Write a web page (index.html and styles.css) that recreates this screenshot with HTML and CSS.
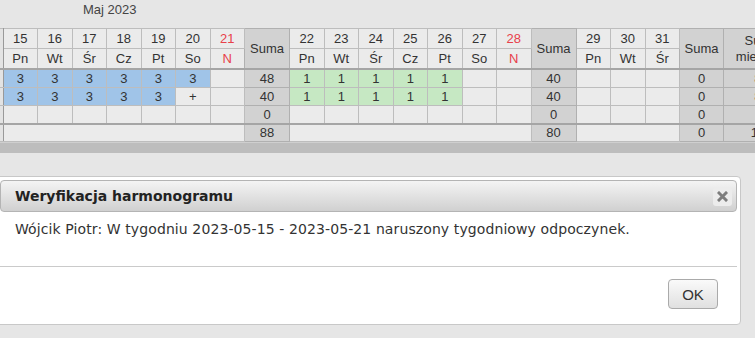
FILE: index.html
```html
<!DOCTYPE html>
<html lang="pl">
<head>
    <meta charset="UTF-8">
    <meta name="viewport" content="width=device-width, initial-scale=1.0">
    <title>Harmonogram</title>
    <link rel="stylesheet" href="styles.css">
</head>
<body>

<div class="schedule">
    <div class="month">Maj 2023</div>
    <table class="grid">
        <colgroup>
            <col class="c-edge">
            <col class="c-day"><col class="c-day"><col class="c-day"><col class="c-day"><col class="c-day"><col class="c-day"><col class="c-day">
            <col class="c-sum">
            <col class="c-day"><col class="c-day"><col class="c-day"><col class="c-day"><col class="c-day"><col class="c-day"><col class="c-day">
            <col class="c-sum">
            <col class="c-day"><col class="c-day"><col class="c-day">
            <col class="c-sum2">
            <col class="c-month">
        </colgroup>
        <thead>
            <tr class="h-num">
                <th class="edge" rowspan="2"></th>
                <th>15</th><th>16</th><th>17</th><th>18</th><th>19</th><th>20</th><th class="sun">21</th>
                <th class="sum" rowspan="2">Suma</th>
                <th>22</th><th>23</th><th>24</th><th>25</th><th>26</th><th>27</th><th class="sun">28</th>
                <th class="sum" rowspan="2">Suma</th>
                <th>29</th><th>30</th><th>31</th>
                <th class="sum" rowspan="2">Suma</th>
                <th class="sum" rowspan="2">Suma<br>miesiąca</th>
            </tr>
            <tr class="h-name">
                <th>Pn</th><th>Wt</th><th>Śr</th><th>Cz</th><th>Pt</th><th>So</th><th class="sun">N</th>
                <th>Pn</th><th>Wt</th><th>Śr</th><th>Cz</th><th>Pt</th><th>So</th><th class="sun">N</th>
                <th>Pn</th><th>Wt</th><th>Śr</th>
            </tr>
        </thead>
        <tbody>
            <tr>
                <td class="edge"></td>
                <td class="blue">3</td><td class="blue">3</td><td class="blue">3</td><td class="blue">3</td><td class="blue">3</td><td class="blue">3</td><td></td>
                <td class="sum">48</td>
                <td class="green">1</td><td class="green">1</td><td class="green">1</td><td class="green">1</td><td class="green">1</td><td></td><td></td>
                <td class="sum">40</td>
                <td></td><td></td><td></td>
                <td class="sum">0</td>
                <td class="sum">88</td>
            </tr>
            <tr>
                <td class="edge"></td>
                <td class="blue">3</td><td class="blue">3</td><td class="blue">3</td><td class="blue">3</td><td class="blue">3</td><td>+</td><td></td>
                <td class="sum">40</td>
                <td class="green">1</td><td class="green">1</td><td class="green">1</td><td class="green">1</td><td class="green">1</td><td></td><td></td>
                <td class="sum">40</td>
                <td></td><td></td><td></td>
                <td class="sum">0</td>
                <td class="sum">80</td>
            </tr>
            <tr>
                <td class="edge"></td>
                <td></td><td></td><td></td><td></td><td></td><td></td><td></td>
                <td class="sum">0</td>
                <td></td><td></td><td></td><td></td><td></td><td></td><td></td>
                <td class="sum">0</td>
                <td></td><td></td><td></td>
                <td class="sum">0</td>
                <td class="sum">0</td>
            </tr>
        </tbody>
        <tfoot>
            <tr>
                <td class="edge"></td>
                <td colspan="7"></td>
                <td class="sum">88</td>
                <td colspan="7"></td>
                <td class="sum">80</td>
                <td colspan="3"></td>
                <td class="sum">0</td>
                <td class="sum">168</td>
            </tr>
        </tfoot>
    </table>
    <div class="scroll-bar"></div>
</div>

<div class="dialog">
    <div class="dialog-head">
        <span class="dialog-title">Weryfikacja harmonogramu</span>
        <span class="dialog-close">
            <svg width="11" height="11" viewBox="0 0 11 11"><path d="M2 2 L9 9 M9 2 L2 9" stroke="#7d7d7d" stroke-width="3" stroke-linecap="square"/></svg>
        </span>
    </div>
    <div class="dialog-body">Wójcik Piotr: W tygodniu 2023-05-15 - 2023-05-21 naruszony tygodniowy odpoczynek.</div>
    <div class="dialog-buttons">
        <button class="ok-button">OK</button>
    </div>
</div>

</body>
</html>
```

FILE: styles.css
```css
body {
    margin: 0;
    background-color: #e6e6e6;
    overflow: hidden;
    font-family: 'Liberation Sans', Arial, sans-serif;
    color: #333;
}
.schedule {
    width: 820px;
}
.month {
    height: 28px;
    line-height: 20px;
    padding-left: 83px;
    font-size: 13px;
    color: #444;
}
.grid {
    table-layout: fixed;
    border-collapse: collapse;
    width: 800px;
    font-size: 13px;
}
.c-edge { width: 3px; }
.c-day { width: 34.5px; }
.c-sum { width: 45px; }
.c-sum2 { width: 44px; }
.c-month { width: 76px; }
th, td {
    border: 1px solid #bdbdbd;
    background-color: #ebebeb;
    text-align: center;
    font-weight: normal;
    padding: 0;
    overflow: hidden;
    white-space: nowrap;
    color: #333;
}
.h-num th, .h-name th {
    height: 19px;
}
th.sum {
    line-height: 16px;
}
td {
    height: 16px;
    line-height: 16px;
}
tbody td {
    height: 17px;
}
thead tr.h-name th {
    border-bottom: 2px solid #a5a5a5;
}
thead th.sum, thead th.edge {
    border-bottom: 2px solid #a5a5a5;
}
tbody tr:last-child td {
    border-bottom: 2px solid #a5a5a5;
}
.edge {
    background-color: #e3e3e3;
    border-left: none;
    border-right: 1px solid #999;
}
.sum {
    background-color: #d2d2d2;
    border-color: #b0b0b0;
}
.sun {
    color: #e8404a;
}
.blue {
    background-color: #a0c4e8;
}
.green {
    background-color: #c6e8c3;
}
.scroll-bar {
    height: 10px;
    background-color: #bdbdbd;
    border-top: 1px solid #cfcfcf;
}
.dialog {
    margin: 23px 0 0 -4px;
    width: 737px;
    padding: 3px;
    border: 1px solid #c8c8c8;
    border-radius: 4px;
    background-color: #fff;
    font-family: 'DejaVu Sans', Verdana, sans-serif;
}
.dialog-head {
    height: 30px;
    display: flex;
    align-items: center;
    justify-content: space-between;
    padding: 0 4px 0 14px;
    border: 1px solid #b4b4b4;
    border-radius: 4px;
    background: linear-gradient(#f4f4f4, #d0d0d0);
}
.dialog-title {
    font-weight: bold;
    font-size: 14px;
    color: #222;
}
.dialog-close {
    width: 19px;
    height: 19px;
    display: flex;
    align-items: center;
    justify-content: center;
    border-radius: 3px;
    background-color: #ececec;
}
.dialog-body {
    height: 45px;
    padding: 9px 15px 0;
    font-size: 14px;
    line-height: 17px;
    letter-spacing: 0.1px;
    color: #333;
}
.dialog-buttons {
    display: flex;
    justify-content: flex-end;
    border-top: 1px solid #cacaca;
    padding: 12px 19px 12px 0;
}
.ok-button {
    width: 50px;
    height: 30px;
    border: 1px solid #aaa;
    border-radius: 4px;
    background: linear-gradient(#fafafa, #e0e0e0);
    font-family: 'Liberation Sans', Arial, sans-serif;
    font-size: 15px;
    color: #333;
}
```
